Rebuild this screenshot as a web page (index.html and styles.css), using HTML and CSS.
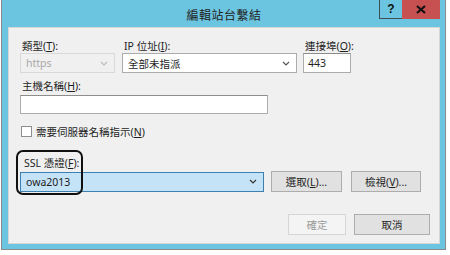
FILE: index.html
```html
<!DOCTYPE html>
<html lang="zh-Hant">
<head>
  <meta charset="UTF-8" />
  <title>編輯站台繫結</title>
  <link rel="stylesheet" href="styles.css">
</head>
<body>
  <div class="window">
    <div class="titlebar">
      <span class="title">編輯站台繫結</span>
      <div class="caption-btns">
        <span class="cap-help">?</span>
        <span class="cap-close">
          <svg width="10" height="9" viewBox="0 0 10 9"><path d="M1 1 L9 8 M9 1 L1 8" stroke="#111" stroke-width="2.2"/></svg>
        </span>
      </div>
    </div>

    <div class="client">
      <div class="row1">
        <div class="field f-type">
          <label>類型(<u>T</u>):</label>
          <div class="combo disabled">
            <span>https</span>
            <svg class="chev" width="8" height="5" viewBox="0 0 8 5"><path d="M1 1 L4 4 L7 1" fill="none" stroke="#bbb" stroke-width="1.2"/></svg>
          </div>
        </div>
        <div class="field f-ip">
          <label>IP 位址(<u>I</u>):</label>
          <div class="combo">
            <span>全部未指派</span>
            <svg class="chev" width="8" height="5" viewBox="0 0 8 5"><path d="M1 1 L4 4 L7 1" fill="none" stroke="#555" stroke-width="1.2"/></svg>
          </div>
        </div>
        <div class="field f-port">
          <label>連接埠(<u>O</u>):</label>
          <div class="textbox">443</div>
        </div>
      </div>

      <div class="field f-host">
        <label>主機名稱(<u>H</u>):</label>
        <div class="textbox"></div>
      </div>

      <div class="check-row">
        <span class="checkbox"></span>
        <span>需要伺服器名稱指示(<u>N</u>)</span>
      </div>

      <div class="ssl">
        <label>SSL 憑證(<u>F</u>):</label>
        <div class="ssl-row">
          <div class="combo selected">
            <span>owa2013</span>
            <svg class="chev" width="8" height="5" viewBox="0 0 8 5"><path d="M1 1 L4 4 L7 1" fill="none" stroke="#333" stroke-width="1.2"/></svg>
          </div>
          <button class="btn b-select">選取(<u>L</u>)...</button>
          <button class="btn b-view">檢視(<u>V</u>)...</button>
        </div>
        <div class="highlight"></div>
      </div>

      <div class="footer">
        <button class="btn b-ok" disabled>確定</button>
        <button class="btn b-cancel">取消</button>
      </div>
    </div>
  </div>
</body>
</html>
```

FILE: styles.css
```css
body {
  margin: 0;
  background: #ffffff;
  font-family: "Noto Sans", "Noto Sans CJK TC", sans-serif;
  font-size: 10.5px;
  color: #1e1e1e;
}
.window {
  position: relative;
  margin-left: 1px;
  width: 445px;
  height: 250px;
  background: #6bc4e0;
  border: 1px solid #8a8a8a;
  border-top: none;
  padding: 0 5px 5px 6px;
  box-sizing: border-box;
  display: flex;
  flex-direction: column;
}
.titlebar {
  height: 27px;
  flex: none;
  display: flex;
  justify-content: center;
  align-items: center;
}
.title {
  font-size: 12px;
  letter-spacing: 0.5px;
  color: #222;
  padding-top: 3px;
}
.caption-btns {
  position: absolute;
  top: 0;
  right: 5px;
  display: flex;
  height: 19px;
}
.cap-help {
  width: 22px;
  height: 18px;
  border: 1px solid #3d4f57;
  border-top: none;
  border-right: none;
  background: #6bc4e0;
  font-family: "Liberation Sans", sans-serif;
  font-weight: bold;
  font-size: 12px;
  color: #111;
  display: flex;
  align-items: center;
  justify-content: center;
}
.cap-close {
  width: 38px;
  height: 19px;
  background: #c75050;
  display: flex;
  align-items: center;
  justify-content: center;
}
.client {
  position: relative;
  flex: 1;
  background: #f0f0f0;
  border: 1px solid #d6d6d6;
  padding: 12px 0 0 11px;
}
.field {
  display: flex;
  flex-direction: column;
}
label {
  display: block;
  white-space: nowrap;
  line-height: 13px;
  height: 13px;
  padding-left: 2px;
}
.row1 {
  display: flex;
  gap: 7px;
}
.f-type { width: 95px; }
.f-ip { width: 175px; }
.f-port { width: 48px; margin-left: -1px; }
.combo {
  height: 20px;
  box-sizing: border-box;
  border: 1px solid #acacac;
  background: #ffffff;
  display: flex;
  align-items: center;
  padding: 0 6px 0 5px;
}
.combo span { flex: 1; }
.combo.disabled {
  border-color: #d9d9d9;
  color: #a8a8a8;
  background: #f0f0f0;
}
.textbox {
  height: 20px;
  box-sizing: border-box;
  border: 1px solid #acacac;
  border-top-color: #8d8d8d;
  background: #ffffff;
  padding: 2px 4px;
  line-height: 14px;
}
.f-host {
  margin-top: 7px;
  width: 248px;
}
.f-host label { margin-bottom: 2px; }
.f-host .textbox { height: 19px; }
.check-row {
  margin-top: 10px;
  display: flex;
  align-items: center;
  gap: 4px;
  padding-left: 1px;
  white-space: nowrap;
}
.checkbox {
  width: 11px;
  height: 11px;
  box-sizing: border-box;
  border: 1px solid #8f8f8f;
  background: #fff;
}
.ssl {
  position: relative;
  margin-top: 18px;
}
.ssl label {
  padding-left: 4px;
}
.ssl-row {
  margin-top: 1px;
  display: flex;
  align-items: center;
}
.combo.selected {
  width: 244px;
  height: 20px;
  background: #c5e3f7;
  border-color: #3c7fb1;
}
.btn {
  font-family: "Noto Sans", "Noto Sans CJK TC", sans-serif;
  font-size: 10.5px;
  color: #1e1e1e;
  background: #e1e1e1;
  border: 1px solid #adadad;
  height: 21px;
  padding: 0;
  white-space: nowrap;
}
.b-select { width: 71px; margin-left: 7px; }
.b-view { width: 70px; margin-left: 9px; }
.highlight {
  position: absolute;
  left: -4px;
  top: -7px;
  width: 63px;
  height: 41px;
  border: 2px solid #111;
  border-radius: 7px;
}
.footer {
  margin-top: 22px;
  display: flex;
  gap: 8px;
  padding-left: 268px;
}
.b-ok {
  width: 58px;
  background: #f4f4f4;
  border-color: #d5d5d5;
  color: #9a9a9a;
}
.b-cancel { width: 76px; }
```
